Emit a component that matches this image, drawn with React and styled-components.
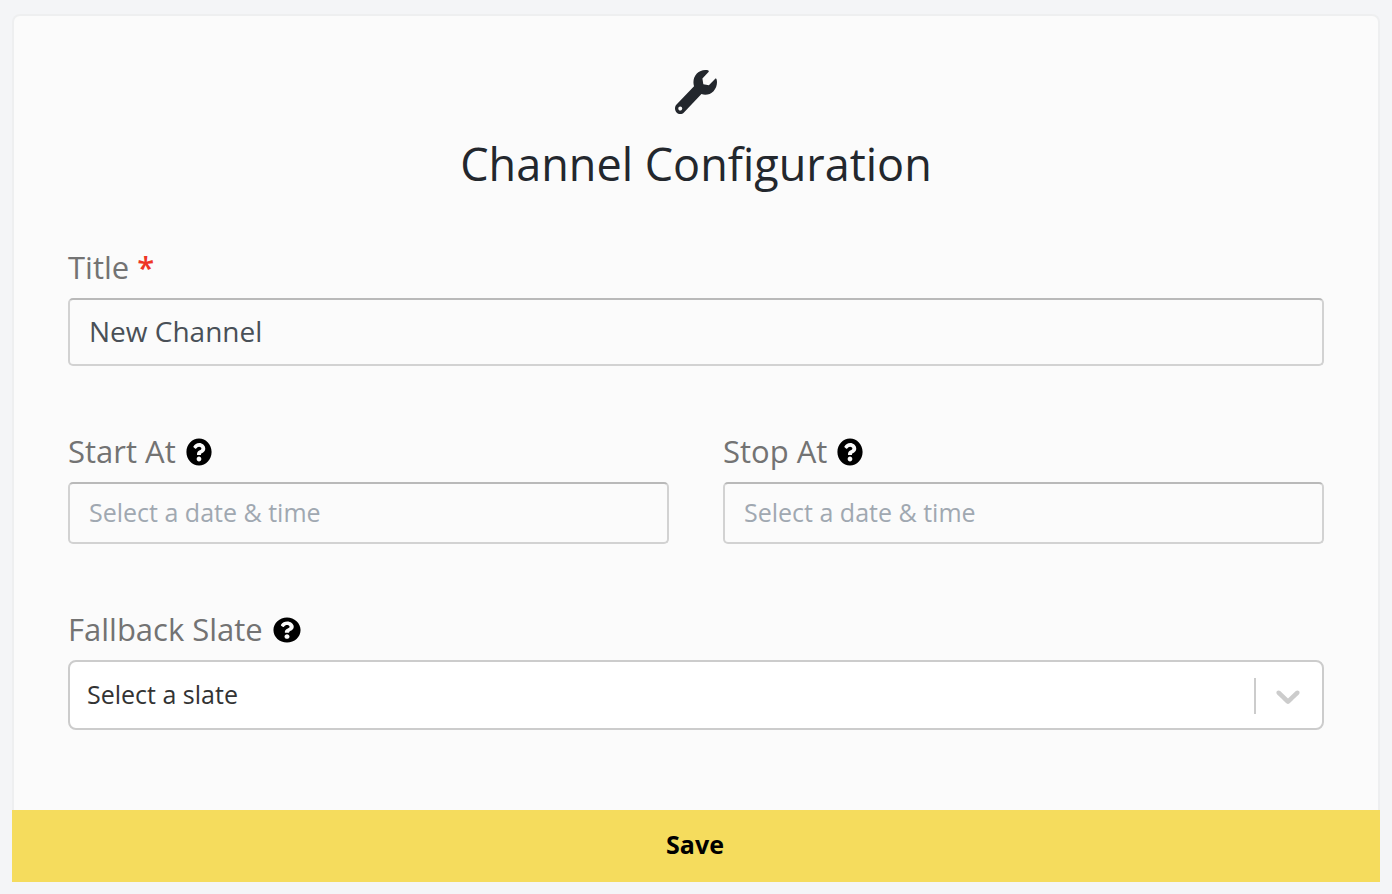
import React, { useState } from "react";
import styled, { createGlobalStyle } from "styled-components";
import { FaWrench, FaQuestionCircle } from "react-icons/fa";

const GlobalStyle = createGlobalStyle`
  * {
    box-sizing: border-box;
  }

  body {
    margin: 0;
    background-color: #f4f5f7;
    color: #23272d;
    font-family: "Open Sans", "Noto Sans", sans-serif;
  }

  input,
  select,
  button {
    font-family: inherit;
  }
`;

const Page = styled.main`
  padding: 14px 12px 12px;
`;

const Form = styled.form`
  display: flex;
  flex-direction: column;
`;

const Card = styled.div`
  display: flex;
  flex-direction: column;
  padding: 54px 54px 80px;
  background-color: #fbfbfb;
  border: 2px solid #eeeff0;
  border-bottom: none;
  border-radius: 8px 8px 0 0;
`;

const Header = styled.header`
  display: flex;
  flex-direction: column;
  align-items: center;
  gap: 20px;
  margin-bottom: 52px;
`;

const HeaderIcon = styled(FaWrench)`
  width: 42px;
  height: 44px;
`;

const Heading = styled.h1`
  margin: 0;
  font-size: 45px;
  line-height: 60px;
  font-weight: 400;
`;

const Fields = styled.div`
  display: flex;
  flex-direction: column;
  gap: 64px;
`;

const FieldRow = styled.div`
  display: grid;
  grid-template-columns: 1fr 1fr;
  gap: 54px;
`;

const Field = styled.div`
  display: flex;
  flex-direction: column;
  gap: 8px;
`;

const LabelRow = styled.div`
  display: flex;
  align-items: center;
  gap: 10px;
`;

const Label = styled.label`
  padding-bottom: 2px;
  font-size: 31px;
  line-height: 42px;
  color: #737373;
`;

const Required = styled.span`
  color: #ee3524;
  font-weight: 600;
`;

const HelpIcon = styled(FaQuestionCircle)`
  width: ${(props) => props.width};
  height: ${(props) => props.height};
  color: #000000;
`;

const Input = styled.input`
  width: 100%;
  height: ${(props) => props.$height};
  padding: 0 19px 2px;
  font-size: ${(props) => props.$size};
  color: #495057;
  background-color: #fbfbfb;
  border: 2px solid #d2d2d2;
  border-top-color: #b9b9b9;
  border-radius: 5px;
  outline: none;

  &::placeholder {
    color: #a0a8b1;
    opacity: 1;
  }
`;

const SelectBox = styled.div`
  position: relative;
`;

const Select = styled.select`
  display: block;
  width: 100%;
  height: 70px;
  padding: 0 70px 2px 17px;
  font-size: 25px;
  color: #333333;
  background-color: #ffffff;
  border: 2px solid #cccccc;
  border-radius: 8px;
  appearance: none;
  outline: none;
`;

const Indicator = styled.div`
  position: absolute;
  top: 18px;
  right: 2px;
  bottom: 16px;
  width: 68px;
  display: flex;
  align-items: center;
  justify-content: center;
  padding-right: 2px;
  border-left: 2px solid #cccccc;
  color: #cccccc;
  pointer-events: none;
`;

const SaveButton = styled.button`
  width: 100%;
  height: 72px;
  padding: 0 2px 4px 0;
  font-size: 25px;
  font-weight: 700;
  color: #000000;
  background-color: #f5dc5d;
  border: none;
  cursor: pointer;
`;

const Chevron = () => (
  <svg width="40" height="40" viewBox="0 0 20 20" fill="currentColor" aria-hidden="true">
    <path d="M4.516 7.548c0.436-0.446 1.043-0.481 1.576 0l3.908 3.747 3.908-3.747c0.533-0.481 1.141-0.446 1.574 0 0.436 0.445 0.408 1.197 0 1.615-0.406 0.418-4.695 4.502-4.695 4.502-0.217 0.223-0.502 0.335-0.787 0.335s-0.57-0.112-0.789-0.335c0 0-4.287-4.084-4.695-4.502s-0.436-1.17 0-1.615z" />
  </svg>
);

const App = () => {
  const [title, setTitle] = useState("New Channel");

  return (
    <Page>
      <GlobalStyle />
      <Form onSubmit={(e) => e.preventDefault()}>
        <Card>
          <Header>
            <HeaderIcon preserveAspectRatio="none" />
            <Heading>Channel Configuration</Heading>
          </Header>

          <Fields>
            <Field>
              <Label htmlFor="title">
                Title <Required>*</Required>
              </Label>
              <Input
                id="title"
                type="text"
                required
                $height="68px"
                $size="28px"
                value={title}
                onChange={(e) => setTitle(e.target.value)}
              />
            </Field>

            <FieldRow>
              <Field>
                <LabelRow>
                  <Label htmlFor="startAt">Start At</Label>
                  <HelpIcon width="26px" height="28px" preserveAspectRatio="none" />
                </LabelRow>
                <Input
                  id="startAt"
                  type="text"
                  $height="62px"
                  $size="25px"
                  placeholder="Select a date & time"
                />
              </Field>
              <Field>
                <LabelRow>
                  <Label htmlFor="stopAt">Stop At</Label>
                  <HelpIcon width="26px" height="28px" preserveAspectRatio="none" />
                </LabelRow>
                <Input
                  id="stopAt"
                  type="text"
                  $height="62px"
                  $size="25px"
                  placeholder="Select a date & time"
                />
              </Field>
            </FieldRow>

            <Field>
              <LabelRow>
                <Label htmlFor="slate">Fallback Slate</Label>
                <HelpIcon width="28px" height="26px" preserveAspectRatio="none" />
              </LabelRow>
              <SelectBox>
                <Select id="slate" defaultValue="">
                  <option value="">Select a slate</option>
                </Select>
                <Indicator>
                  <Chevron />
                </Indicator>
              </SelectBox>
            </Field>
          </Fields>
        </Card>
        <SaveButton type="submit">Save</SaveButton>
      </Form>
    </Page>
  );
};

export default App;
